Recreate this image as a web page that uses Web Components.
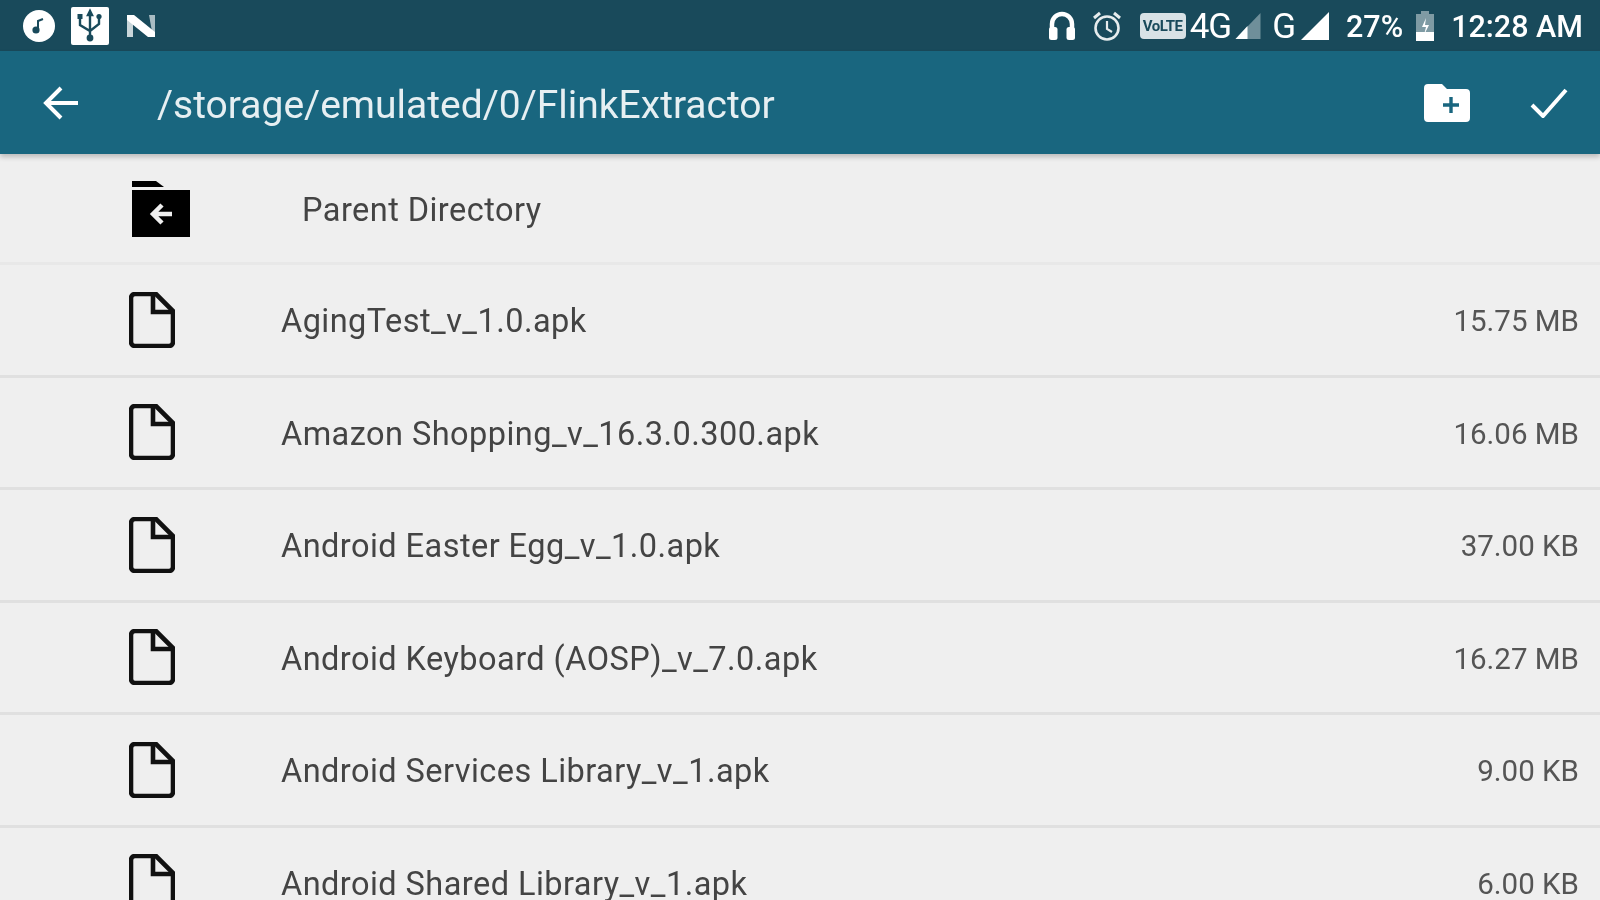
<!doctype html>
<html>
<head>
<meta charset="utf-8">
<title>FlinkExtractor</title>
<style>
  html, body { margin: 0; height: 100%; overflow: hidden; background: #efefef; }
  body { font-family: Roboto, "Liberation Sans", sans-serif; display: flex; flex-direction: column; filter: blur(.7px); }
</style>
</head>
<body>
<status-bar></status-bar>
<app-toolbar>/storage/emulated/0/FlinkExtractor</app-toolbar>
<file-list>
  <file-row kind="parent" name="Parent Directory"></file-row>
  <file-row name="AgingTest_v_1.0.apk" size="15.75 MB"></file-row>
  <file-row name="Amazon Shopping_v_16.3.0.300.apk" size="16.06 MB"></file-row>
  <file-row name="Android Easter Egg_v_1.0.apk" size="37.00 KB"></file-row>
  <file-row name="Android Keyboard (AOSP)_v_7.0.apk" size="16.27 MB"></file-row>
  <file-row name="Android Services Library_v_1.apk" size="9.00 KB"></file-row>
  <file-row name="Android Shared Library_v_1.apk" size="6.00 KB"></file-row>
</file-list>
<script>
class StatusBar extends HTMLElement {
  constructor() {
    super();
    this.attachShadow({ mode: "open" });
  }

  connectedCallback() {
    this.shadowRoot.innerHTML = /* html */`
    <style>
      :host {
        display: flex;
        flex: none;
        height: 51px;
        background: #194a5b;
        color: #fff;
        align-items: center;
        justify-content: space-between;
        padding: 0 17px 0 22px;
        box-sizing: border-box;
        font-size: 30.500px;
        font-weight: 500;
      }
      .side { display: flex; align-items: center; }
      .side span { padding-top: 2px; }
      svg { display: block; flex: none; }
      .g { font-weight: 400; font-size: 35px; letter-spacing: -1px; }
      .side .lte {
        padding: 0;
        font-size: 15px; font-weight: 700; background: #d8e2e6; color: #194a5b;
        border-radius: 4px; width: 46px; height: 26px; line-height: 26px; text-align: center;
        letter-spacing: -.5px; overflow: hidden;
      }
    </style>
    <div class="side">
      <svg width="34" height="34" viewBox="0 0 34 34" style="margin-right:15px">
        <circle cx="17" cy="17" r="16" fill="#fff"/>
        <circle cx="14" cy="21" r="3.6" fill="#194a5b"/>
        <path d="M16 21V12l5-2" fill="none" stroke="#194a5b" stroke-width="2"/>
      </svg>
      <svg width="38" height="38" viewBox="0 0 38 38" style="margin-right:16px">
        <rect width="38" height="38" rx="2" fill="#fff"/>
        <path d="M19 4v30M9 11v7l10 6 9-7v-5M19 4l-2 4h4z" fill="none" stroke="#194a5b" stroke-width="2.4"/>
        <circle cx="19" cy="31" r="3.4" fill="#194a5b"/>
        <rect x="6.500" y="7" width="5" height="5" fill="#194a5b"/>
        <circle cx="28" cy="9.500" r="2.600" fill="#194a5b"/>
      </svg>
      <svg width="32" height="26" viewBox="0 0 32 26">
        <path d="M2 2h6v22H2z" fill="#c9d6da"/>
        <path d="M24 2h6v22h-2z" fill="#a9bcc3"/>
        <path d="M2 2h7l21 17v5h-7L2 7z" fill="#fff"/>
      </svg>
    </div>
    <div class="side">
      <svg width="28" height="30" viewBox="0 0 28 30" style="margin-right:16px">
        <path d="M4 19V13a10 10 0 0 1 20 0v6" fill="none" stroke="#fff" stroke-width="4.500"/>
        <rect x="1" y="16" width="8.500" height="13" rx="2.500" fill="#fff"/>
        <rect x="18.500" y="16" width="8.500" height="13" rx="2.500" fill="#fff"/>
      </svg>
      <svg width="30" height="32" viewBox="0 0 30 32" style="margin-right:18px">
        <circle cx="15" cy="18" r="11.500" fill="none" stroke="#e6eced" stroke-width="2.600"/>
        <path d="M15 11v8l5 3" fill="none" stroke="#e6eced" stroke-width="2.200"/>
        <path d="M2 8l6-5M28 8l-6-5" fill="none" stroke="#e6eced" stroke-width="3"/>
      </svg>
      <span class="lte">VoLTE</span>
      <span class="g" style="margin-left:4px">4G</span>
      <svg width="29" height="28" viewBox="0 0 28 28" style="margin-left:3px">
        <path d="M26 1v26H1z" fill="#6f8f9a"/>
        <path d="M13 14v13H1z" fill="#fff"/>
      </svg>
      <span class="g" style="margin-left:9px">G</span>
      <svg width="30" height="30" viewBox="0 0 30 30" style="margin-left:5px">
        <path d="M29 1v28H1z" fill="#fff"/>
      </svg>
      <span style="margin-left:16px;margin-right:-1px">27%</span>
      <svg width="22" height="32" viewBox="0 0 22 32" style="margin-left:12px">
        <path d="M7 1h8v3h5v21H2V4h5z" fill="#7f9ba4"/>
        <path d="M2 22h18v9H2z" fill="#fff"/>
        <path d="M12 8l-4 9h4l-2 8 5-10h-4z" fill="#fff"/>
      </svg>
      <span style="margin-left:15px">12:28 AM</span>
    </div>`;
  }
}

class AppToolbar extends HTMLElement {
  constructor() {
    super();
    this.attachShadow({ mode: "open" });
  }

  connectedCallback() {
    this.shadowRoot.innerHTML = /* html */`
    <style>
      :host {
        display: flex;
        flex: none;
        height: 103px;
        background: #19667f;
        color: #fff;
        align-items: center;
        box-sizing: border-box;
        padding: 1px 32px 0 43px;
        font-size: 39px;
        box-shadow: 0 3px 5px rgba(0, 0, 0, .22);
        position: relative;
        z-index: 1;
      }
      .title { flex: 1; margin-left: 78px; white-space: nowrap; color: #e6eff2; padding-top: 4px; }
      svg { display: block; flex: none; }
    </style>
    <svg width="36" height="36" viewBox="0 0 36 36">
      <path d="M35 18H3M18 3L3 18l15 15" fill="none" stroke="#fff" stroke-width="4"/>
    </svg>
    <span class="title"><slot></slot></span>
    <svg width="46" height="38" viewBox="0 0 46 38" style="margin-right:60px">
      <path d="M4 0h14l5 5h19a4 4 0 0 1 4 4v25a4 4 0 0 1-4 4H4a4 4 0 0 1-4-4V4a4 4 0 0 1 4-4z" fill="#fff"/>
      <path d="M27 13v16M19 21h16" stroke="#19667f" stroke-width="3.400"/>
    </svg>
    <svg width="38" height="30" viewBox="0 0 38 30">
      <path d="M2 17l11 11L36 2" fill="none" stroke="#fff" stroke-width="4"/>
    </svg>`;
  }
}

class FileList extends HTMLElement {
  constructor() {
    super();
    this.attachShadow({ mode: "open" });
  }

  connectedCallback() {
    this.shadowRoot.innerHTML = /* html */`
    <style>
      :host { display: block; flex: 1; min-height: 0; overflow: hidden; }
    </style>
    <slot></slot>`;
  }
}

class FileRow extends HTMLElement {
  constructor() {
    super();
    this.attachShadow({ mode: "open" });
  }

  static get styles() {
    return /* css */`
      :host {
        display: grid;
        grid-template-columns: 152px 1fr auto;
        align-items: center;
        height: 112.5px;
        box-sizing: border-box;
        padding: 0 21px 0 129px;
        border-bottom: 3px solid #e0e0e0;
        color: #444;
        font-size: 32.500px;
        letter-spacing: .45px;
      }
      :host([kind="parent"]) {
        height: 111px;
        grid-template-columns: 173px 1fr auto;
        border-bottom-color: #e8e8e8;
      }
      svg { display: block; }
      :host([kind="parent"]) svg { margin-top: 2px; }
      span { padding-top: 3px; }
      .size { font-size: 29.500px; color: #555; letter-spacing: 0; }
    `;
  }

  connectedCallback() {
    const parent = this.getAttribute("kind") === "parent";
    const icon = parent
      ? /* html */`<svg width="62" height="56" viewBox="0 0 62 56">
          <path d="M3 0h24l8 6H3z" fill="#000"/>
          <path d="M3 9h58v47H3z" fill="#000"/>
          <path d="M43 33H25M33 24l-9 9 9 9" fill="none" stroke="#efefef" stroke-width="4.500"/>
        </svg>`
      : /* html */`<svg width="46" height="56" viewBox="0 0 46 56">
          <path d="M6 2h21l17 17v31a4 4 0 0 1-4 4H6a4 4 0 0 1-4-4V6a4 4 0 0 1 4-4z" fill="none" stroke="#111" stroke-width="4.600"/>
          <path d="M24 3v17h19" fill="none" stroke="#111" stroke-width="4.600"/>
        </svg>`;
    this.shadowRoot.innerHTML = /* html */`
    <style>${FileRow.styles}</style>
    ${icon}
    <span>${this.getAttribute("name")}</span>
    <span class="size">${this.getAttribute("size") || ""}</span>`;
  }
}

customElements.define("status-bar", StatusBar);
customElements.define("app-toolbar", AppToolbar);
customElements.define("file-list", FileList);
customElements.define("file-row", FileRow);
</script>
</body>
</html>
